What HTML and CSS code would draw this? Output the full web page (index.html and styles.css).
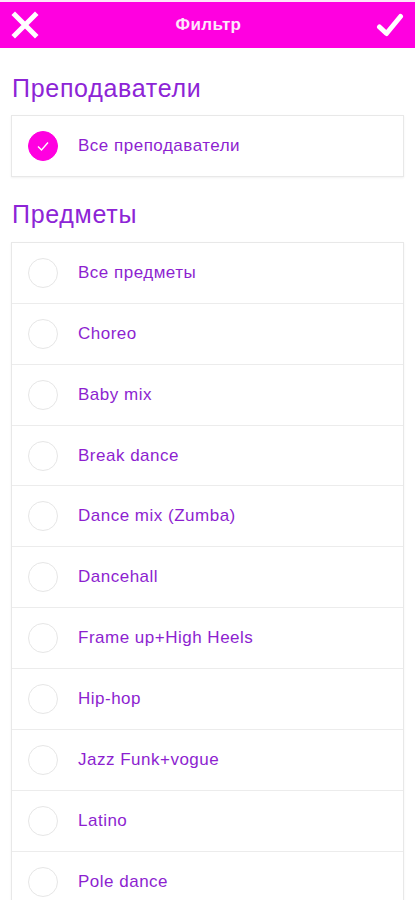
FILE: index.html
```html
<!DOCTYPE html>
<html lang="ru">
<head>
<meta charset="utf-8">
<link rel="stylesheet" href="styles.css">
</head>
<body>
<div class="topline"></div>
<header class="bar">
  <svg class="ico" width="28" height="28" viewBox="0 0 28 28"><path d="M4 4 L24 24 M24 4 L4 24" stroke="#fff" stroke-width="5" stroke-linecap="square"/></svg>
  <div class="title">Фильтр</div>
  <svg class="ico" width="28" height="28" viewBox="0 0 28 28"><path d="M3.5 16 L10.5 22.5 L24.5 5.5" stroke="#fff" stroke-width="5" fill="none" stroke-linecap="round" stroke-linejoin="round"/></svg>
</header>
<main class="content">
  <h2 class="heading h1">Преподаватели</h2>
  <div class="card">
    <div class="row">
      <span class="radio on"><svg width="14" height="14" viewBox="0 0 14 14"><path d="M2 7.5 L5.5 11 L12 3.5" stroke="#fff" stroke-width="1.4" fill="none"/></svg></span>
      <span class="label">Все преподаватели</span>
    </div>
  </div>
  <h2 class="heading h2">Предметы</h2>
  <div class="card">
    <div class="row"><span class="radio"></span><span class="label">Все предметы</span></div>
    <div class="row"><span class="radio"></span><span class="label">Choreo</span></div>
    <div class="row"><span class="radio"></span><span class="label">Baby mix</span></div>
    <div class="row"><span class="radio"></span><span class="label">Break dance</span></div>
    <div class="row"><span class="radio"></span><span class="label">Dance mix (Zumba)</span></div>
    <div class="row"><span class="radio"></span><span class="label">Dancehall</span></div>
    <div class="row"><span class="radio"></span><span class="label">Frame up+High Heels</span></div>
    <div class="row"><span class="radio"></span><span class="label">Hip-hop</span></div>
    <div class="row"><span class="radio"></span><span class="label">Jazz Funk+vogue</span></div>
    <div class="row"><span class="radio"></span><span class="label">Latino</span></div>
    <div class="row"><span class="radio"></span><span class="label">Pole dance</span></div>
  </div>
</main>
</body>
</html>
```
FILE: styles.css
```css
html, body {
  margin: 0;
  padding: 0;
  background: #fff;
  font-family: "Liberation Sans", Arial, sans-serif;
  overflow: hidden;
}
.topline {
  height: 2px;
  background: #fde6fa;
}
.bar {
  height: 46px;
  background: #ff00e0;
  display: flex;
  align-items: center;
  justify-content: space-between;
  padding: 0 11px 0 11px;
}
.title {
  color: #fde8fb;
  font-size: 17px;
  font-weight: 700;
  letter-spacing: 0.4px;
  margin-left: 2px;
}
.content {
  padding: 0 11px;
}
.heading {
  margin: 0;
  font-weight: 400;
  font-size: 25px;
  line-height: 28px;
  letter-spacing: 0.7px;
  color: #8d24d6;
  padding-left: 1px;
}
.h1 { margin-top: 26px; margin-bottom: 13px; }
.h2 { margin-top: 23px; margin-bottom: 14px; }
.card {
  border: 1px solid #e8e8e8;
  box-shadow: 0 1px 2px rgba(0,0,0,0.06);
  background: #fff;
}
.row {
  height: 59.9px;
  display: flex;
  align-items: center;
  padding-left: 16px;
  border-top: 1px solid #ececec;
}
.row:first-child {
  border-top: none;
}
.radio {
  width: 30px;
  height: 30px;
  border-radius: 50%;
  border: 1px solid #e6e6e6;
  box-sizing: border-box;
  flex: none;
  display: flex;
  align-items: center;
  justify-content: center;
}
.radio.on {
  background: #ff00e0;
  border-color: #ff00e0;
}
.label {
  margin-left: 20px;
  font-size: 17px;
  letter-spacing: 0.5px;
  color: #8d1fd0;
}
```
